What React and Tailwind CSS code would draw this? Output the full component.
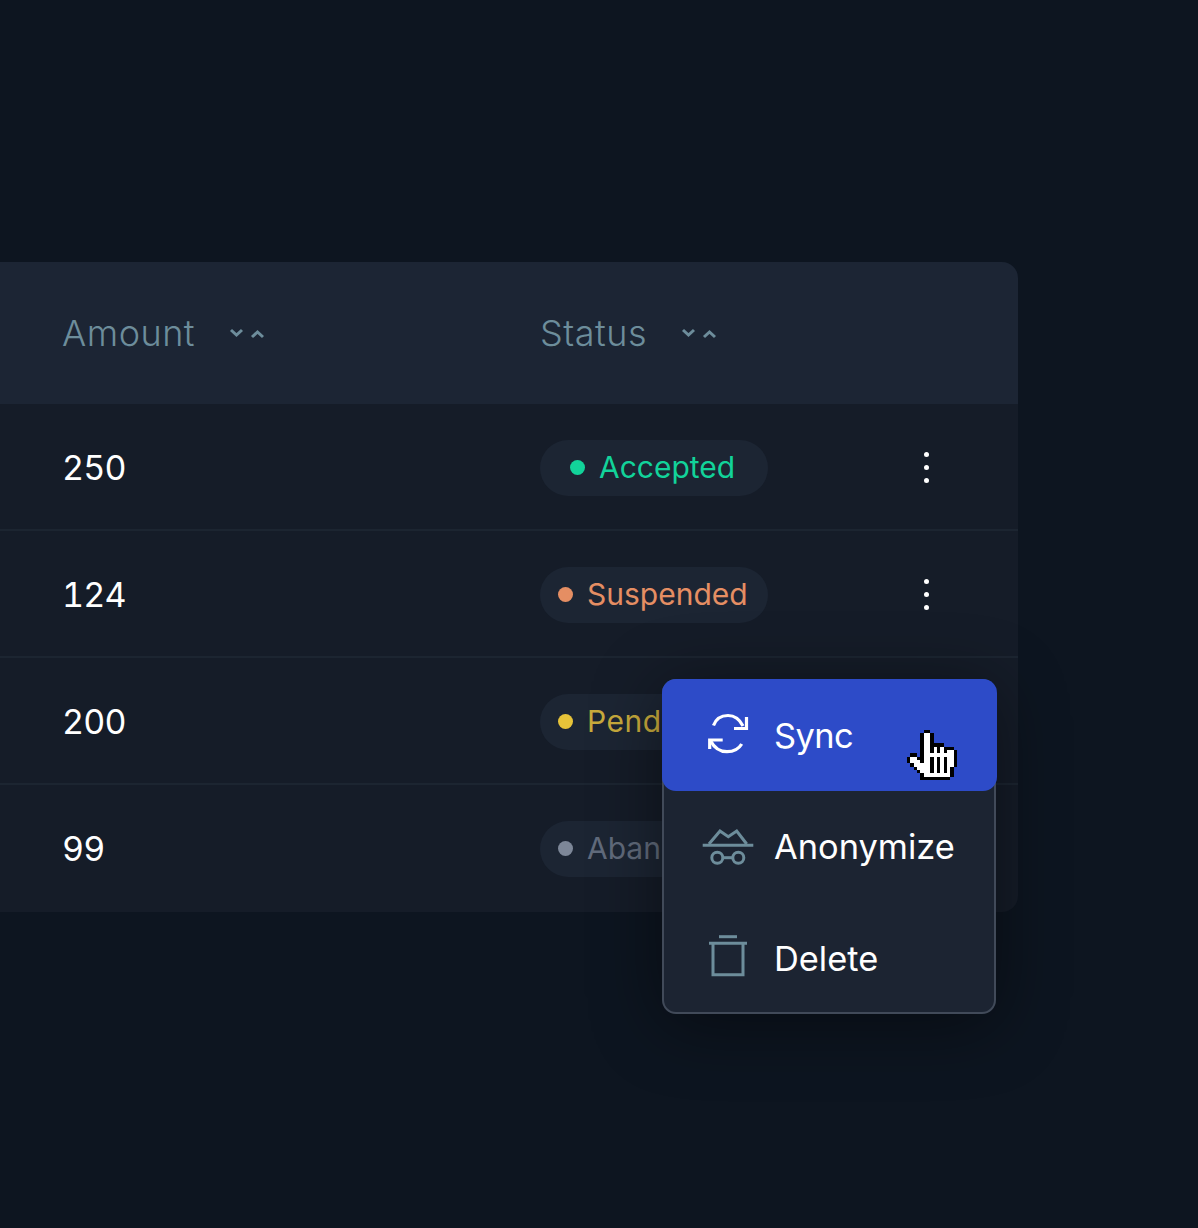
import React from 'react';

const FONT = 'font-["Inter",sans-serif]';

const rows = [
    { amount: '250', label: 'Accepted', dot: 'bg-[#12d39a]', text: 'text-[#12d39a]', pad: 'pl-[30px]' },
    { amount: '124', label: 'Suspended', dot: 'bg-[#e58e63]', text: 'text-[#e58e63]', pad: 'pl-[18px]' },
    { amount: '200', label: 'Pending', dot: 'bg-[#e6c339]', text: 'text-[#c9ab3c] tracking-[0.5px]', pad: 'pl-[18px]' },
    { amount: '99', label: 'Abandoned', dot: 'bg-[#7d8798]', text: 'text-[#616b7c]', pad: 'pl-[18px]' },
];

// pixel cursor, one character per pixel
const HAND = [
    '.....kk........',
    '....kwwk.......',
    '....kwwk.......',
    '....kwwk.......',
    '....kwwkkkk....',
    '....kwwkwkwkkk.',
    '....kwwkwkwkwwk',
    '.kk.kwwwwwwwwwk',
    'kwwkkwwkwkwkwwk',
    'kwwwkwwkwkwkwwk',
    '.kwwwwwkwkwkwwk',
    '..kwwwwkwkwkwk.',
    '...kwwwkwkwkwk.',
    '....kwwwwwwwwk.',
    '....kkkkkkkkk..',
];

function Cursor() {
    return (
        <svg width="50" height="50" viewBox="0 0 15 15" shapeRendering="crispEdges" className="absolute left-[245px] top-[51px]">
            {HAND.flatMap((row, y) =>
                row.split('').map((c, x) =>
                    c === '.' ? null : <rect key={`${x}-${y}`} x={x} y={y} width="1" height="1" fill={c === 'k' ? '#000' : '#fff'} />
                )
            )}
        </svg>
    );
}

function SortIcon() {
    return (
        <svg width="36" height="16" viewBox="0 0 36 16" fill="none" stroke="#6d8d9b" strokeWidth="3" className="ml-[34px] mt-[2px]">
            <path d="M2 4l5.500 5L13 4" />
            <path d="M23 11l5.500-5L34 11" />
        </svg>
    );
}

function Kebab() {
    return (
        <div className="flex flex-col items-center gap-[8px] w-[6px] ml-[155px]">
            <span className="w-[5px] h-[5px] rounded-full bg-white" />
            <span className="w-[5px] h-[5px] rounded-full bg-white" />
            <span className="w-[5px] h-[5px] rounded-full bg-white" />
        </div>
    );
}

function SyncIcon() {
    return (
        <svg width="60" height="60" viewBox="0 0 60 60" fill="none" stroke="#fff" strokeWidth="3.2">
            <path d="M15.500 20.500C18 13.500 24 10.500 30 10.500c6.500 0 11.500 3.500 15 10.500" />
            <path d="M48.500 12v11.500H36" />
            <path d="M43.700 39C40.500 44.500 35 46.700 29 46.700c-6.500 0-12.500-3.500-16.500-11" />
            <path d="M11.700 44V35h13" />
        </svg>
    );
}

function HatIcon() {
    return (
        <svg width="60" height="60" viewBox="0 0 60 60" fill="none" stroke="#6d8d9b" strokeWidth="3">
            <path d="M4.700 28.300h50.600" />
            <path d="M11 27L22 14l8.300 5.700L38.700 14l10 13" />
            <circle cx="19.300" cy="40.700" r="5.500" />
            <circle cx="40.300" cy="40.700" r="5.500" />
            <path d="M24.800 40.700h10" />
        </svg>
    );
}

function TrashIcon() {
    return (
        <svg width="60" height="60" viewBox="0 0 60 60" fill="none" stroke="#6d8d9b" strokeWidth="3">
            <path d="M21 8.700h18" />
            <path d="M11 15.300h38" />
            <path d="M15 15.300v31.400h30V15.300" />
        </svg>
    );
}

function ActionMenu() {
    return (
        <div className="absolute left-[662px] top-[417px] w-[334px] h-[335px] rounded-[14px] border-2 border-[#414a59] bg-[#1c2432] shadow-[0_10px_70px_rgba(0,0,0,0.45)]">
            <div className="relative -mt-[2px] -ml-[2px] -mr-[3px] h-[112px] rounded-[14px] bg-[#2d4bc8] flex items-center pl-[36px] gap-[16px]">
                <SyncIcon />
                <span className="text-white text-[34.400px] tracking-[-0.6px] pt-[1px]">Sync</span>
                <Cursor />
            </div>
            <div className="h-[112px] flex items-center pl-[34px] gap-[16px]">
                <HatIcon />
                <span className="text-white text-[34.400px]">Anonymize</span>
            </div>
            <div className="h-[110px] flex items-center pl-[34px] gap-[16px]">
                <TrashIcon />
                <span className="text-white text-[34.400px] pt-[2px]">Delete</span>
            </div>
        </div>
    );
}

export default function App() {
    return (
        <div className={`min-h-[1228px] bg-[#0d1520] pt-[262px] overflow-hidden ${FONT}`}>
            <div className="relative w-[1018px]">
                <div className="grid grid-cols-[540px_1fr] items-center h-[142px] bg-[#1c2534] rounded-tr-[16px] text-[#6d8d9b] text-[36px] font-light tracking-[0.5px]">
                    <div className="flex items-center pl-[62px]">
                        <span>Amount</span>
                        <SortIcon />
                    </div>
                    <div className="flex items-center">
                        <span>Status</span>
                        <SortIcon />
                    </div>
                </div>
                {rows.map((row, i) => (
                    <div
                        key={row.amount}
                        className={`grid grid-cols-[540px_228px_1fr] items-center h-[127px] bg-[#151c28] ${i < 3 ? 'border-b-2 border-[#1c2531] pt-[2px]' : 'rounded-br-[16px]'}`}
                    >
                        <div className="pl-[62px] text-white text-[34px] tabular-nums tracking-[-0.8px]">{row.amount}</div>
                        <div className={`flex items-center gap-[14px] h-[56px] rounded-full bg-[#1c2533] whitespace-nowrap ${row.pad}`}>
                            <span className={`w-[15px] h-[15px] rounded-full shrink-0 ${row.dot}`} />
                            <span className={`text-[30px] ${row.text}`}>{row.label}</span>
                        </div>
                        <Kebab />
                    </div>
                ))}
                <ActionMenu />
            </div>
        </div>
    );
}
